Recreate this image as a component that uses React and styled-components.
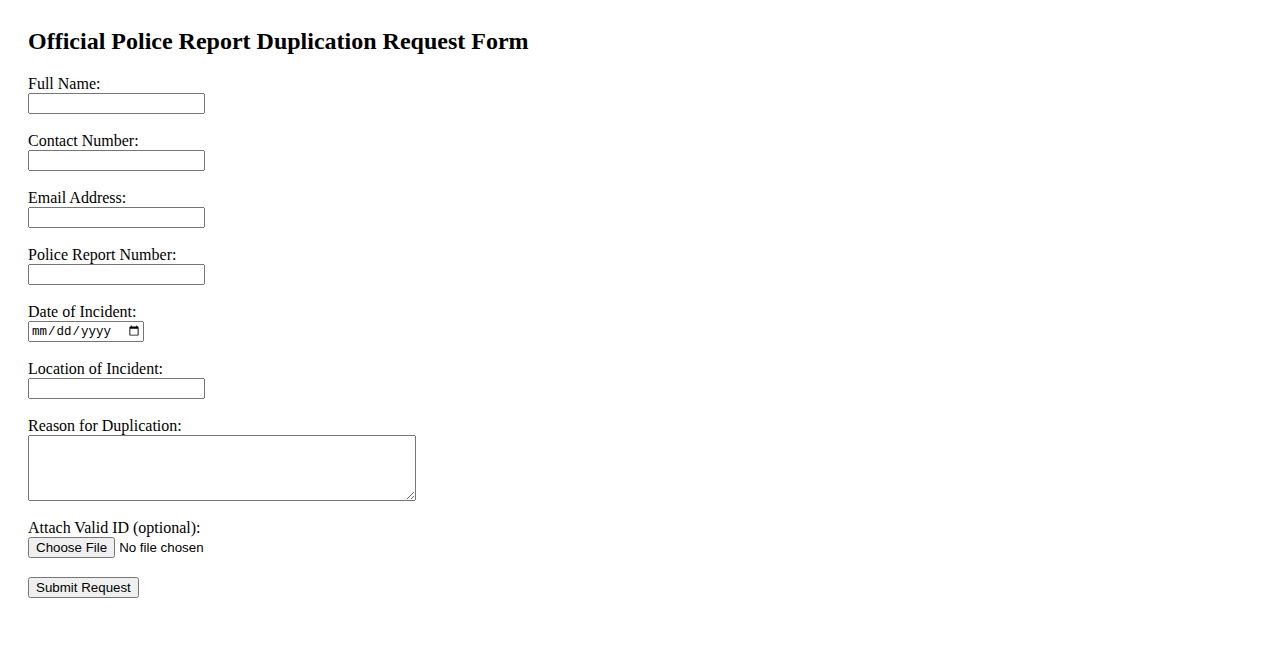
import React from "react";
import styled, { createGlobalStyle } from "styled-components";

const Global = createGlobalStyle`
  body {
    margin: 8px;
    background: #ffffff;
    color: #000000;
    font-family: "Liberation Serif", "Times New Roman", serif;
    font-size: 16px;
  }
`;

const Page = styled.div`
  padding: 20px;
`;

const Title = styled.h2`
  margin: 0 0 20px;
  font-size: 24px;
  font-weight: bold;
  line-height: 27px;
`;

const Form = styled.form`
  display: flex;
  flex-direction: column;
  align-items: flex-start;
`;

const Field = styled.div`
  display: flex;
  flex-direction: column;
  align-items: flex-start;
  margin-bottom: 18px;
`;

const Label = styled.label`
  display: block;
  font-size: 16px;
  line-height: 18px;
`;

const TextInput = styled.input`
  box-sizing: border-box;
  width: 177px;
  height: 21px;
  margin: 0;
  font-family: "Liberation Sans", Arial, sans-serif;
  font-size: 13.33px;
`;

const DateInput = styled.input`
  box-sizing: border-box;
  width: 116px;
  height: 21px;
  margin: 0;
  font-family: "Liberation Mono", "Courier New", monospace;
  font-size: 12.5px;
`;

const TextArea = styled.textarea`
  box-sizing: border-box;
  display: block;
  width: 388px;
  height: 66px;
  margin: 0;
`;

const FileInput = styled.input`
  margin: 0;
  font-family: "Liberation Sans", Arial, sans-serif;
  font-size: 13.33px;
  height: 21px;
`;

const Button = styled.button`
  margin: 1px 0 0;
  font-family: "Liberation Sans", Arial, sans-serif;
  font-size: 13.33px;
  height: 21px;
`;

const fields = [
  { id: "name", label: "Full Name:", type: "text" },
  { id: "phone", label: "Contact Number:", type: "tel" },
  { id: "email", label: "Email Address:", type: "email" },
  { id: "report", label: "Police Report Number:", type: "text" },
  { id: "date", label: "Date of Incident:", type: "date" },
  { id: "location", label: "Location of Incident:", type: "text" },
];

export default function App() {
  return (
    <>
      <Global />
      <Page>
        <Title>Official Police Report Duplication Request Form</Title>
        <Form onSubmit={(e) => e.preventDefault()}>
          {fields.map((f) => (
            <Field key={f.id}>
              <Label htmlFor={f.id}>{f.label}</Label>
              {f.type === "date" ? (
                <DateInput id={f.id} type="date" />
              ) : (
                <TextInput id={f.id} type={f.type} />
              )}
            </Field>
          ))}
          <Field>
            <Label htmlFor="reason">Reason for Duplication:</Label>
            <TextArea id="reason" rows={4} />
          </Field>
          <Field>
            <Label htmlFor="idfile">Attach Valid ID (optional):</Label>
            <FileInput id="idfile" type="file" />
          </Field>
          <Button type="submit">Submit Request</Button>
        </Form>
      </Page>
    </>
  );
}
